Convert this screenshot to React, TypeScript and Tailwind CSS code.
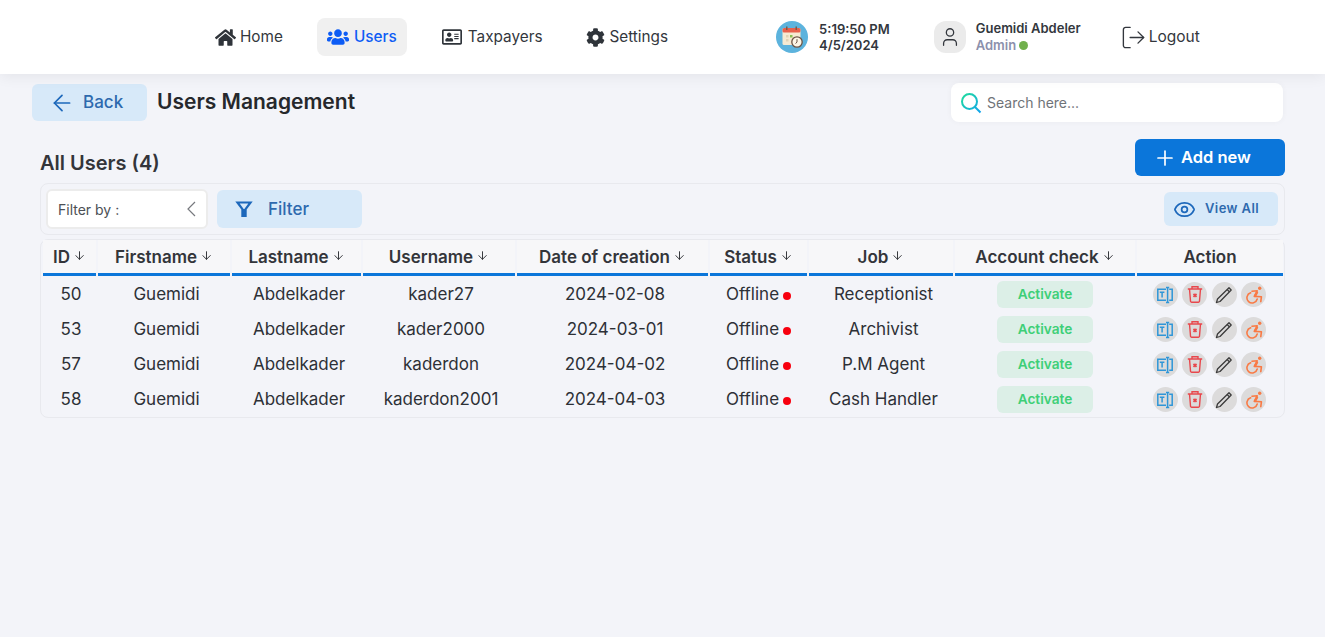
import React from 'react';
import { FaHome, FaUsers, FaCog, FaRegAddressCard } from 'react-icons/fa';
import { ArrowLeft, ArrowDown, Eye, LogOut, Plus, User } from 'lucide-react';

const rows = [
  { id: 50, username: 'kader27', date: '2024-02-08', job: 'Receptionist' },
  { id: 53, username: 'kader2000', date: '2024-03-01', job: 'Archivist' },
  { id: 57, username: 'kaderdon', date: '2024-04-02', job: 'P.M Agent' },
  { id: 58, username: 'kaderdon2001', date: '2024-04-03', job: 'Cash Handler' },
];

const columns = ['ID', 'Firstname', 'Lastname', 'Username', 'Date of creation', 'Status', 'Job', 'Account check'];

const gridCols = 'grid grid-cols-[53px_132px_129px_152px_191px_97px_144px_180px_146px] gap-x-[2px]';

const CalendarIcon = () => (
  <svg width="32" height="32" viewBox="0 0 32 32">
    <circle cx="16" cy="16" r="16" fill="#5cb3dd" />
    <rect x="6.5" y="7" width="18" height="17" rx="1.5" fill="#f6ead2" />
    <rect x="6.5" y="7" width="18" height="4.5" rx="1.5" fill="#e8604c" />
    <rect x="10" y="5.5" width="1.5" height="3.5" fill="#7a5a48" />
    <rect x="19.5" y="5.5" width="1.5" height="3.5" fill="#7a5a48" />
    <rect x="10" y="14" width="2.5" height="2.5" fill="#e3d3b5" />
    <rect x="14" y="14" width="2.5" height="2.5" fill="#8cc152" />
    <rect x="10" y="18" width="2.5" height="2.5" fill="#e3d3b5" />
    <circle cx="21" cy="21" r="5.2" fill="#fdf6e6" stroke="#6b5344" strokeWidth="1.3" />
    <path d="M21 18.2V21l-1.4 1.6" stroke="#6b5344" strokeWidth="1" fill="none" />
  </svg>
);

const SearchIcon = () => (
  <svg width="22" height="22" viewBox="0 0 22 22" fill="none">
    <defs>
      <linearGradient id="searchGrad" x1="0" y1="0" x2="1" y2="1">
        <stop offset="0" stopColor="#1fdc9c" />
        <stop offset="1" stopColor="#11a3ee" />
      </linearGradient>
    </defs>
    <path d="M9.5 2a7.5 7.5 0 1 1 0 15 7.5 7.5 0 0 1 0-15ZM15 15l5.5 5.5" stroke="url(#searchGrad)" strokeWidth="2" />
  </svg>
);

const FunnelIcon = () => (
  <svg width="18" height="18" viewBox="0 0 18 18" fill="none" stroke="#1d68bb" strokeWidth="2.2" strokeLinejoin="miter">
    <path d="M2.5 2.5h13L10.6 9v7H7.4V9Z" />
    <path d="M9 9v7" />
  </svg>
);

const ChevronIcon = () => (
  <svg width="10" height="16" viewBox="0 0 10 16" fill="none" stroke="#77797e" strokeWidth="1.2">
    <path d="M9 1 2 8l7 7" />
  </svg>
);

const TextIcon = () => (
  <svg width="18" height="18" viewBox="0 0 18 18" fill="none" stroke="#2f96d8" strokeWidth="1.5">
    <path d="M10 3.2H1.8v11H10" />
    <path d="M3.8 6.2h4.6M6.1 6.2v5.4" />
    <path d="M11.6 1.5v15M10 1.5h3.2M10 16.5h3.2" />
    <path d="M13.2 3.2h3v11h-3" />
  </svg>
);

const TrashIcon = () => (
  <svg width="18" height="19" viewBox="0 0 18 19" fill="none" stroke="#e8474c" strokeWidth="1.4">
    <path d="M1.8 4h14.4M6 4V1.8h6V4" />
    <path d="M3.5 4l1 12a1.2 1.2 0 0 0 1.2 1.2h6.6a1.2 1.2 0 0 0 1.2-1.2l1-12" />
    <path d="M7.5 8.8l3 3M10.5 8.8l-3 3" strokeWidth="1.7" />
  </svg>
);

const PencilIcon = () => (
  <svg width="18" height="18" viewBox="0 0 18 18" fill="none" stroke="#3a3a3a" strokeWidth="1.3" strokeLinejoin="round">
    <path d="M14 1.8l2.2 2.2L5 15.5l-3.5 1 1-3.5Z" />
    <path d="M12.2 3.6l2.2 2.2" />
  </svg>
);

const WheelchairIcon = () => (
  <svg width="18" height="18" viewBox="0 0 18 18" fill="none" stroke="#f97a45" strokeWidth="1.6" strokeLinecap="round" strokeLinejoin="round">
    <circle cx="14.7" cy="2.3" r="1.7" fill="#f97a45" stroke="none" />
    <path d="M5.6 6.8A5.2 5.2 0 1 0 12.2 13" />
    <path d="M7 5.2 12.2 4.8 9.2 10.4 16.4 10.8 15.8 15.7" />
    <path d="M12 6.5 10.4 9.5" strokeWidth="2.4" />
  </svg>
);

const NavItem = ({ icon, label, className }: { icon: React.ReactNode; label: string; className?: string }) => (
  <div className={`flex items-center text-[15.3px] font-normal text-[#33373d] ${className ?? ''}`}>
    {icon}
    <span>{label}</span>
  </div>
);

const ActionCircle = ({ children }: { children: React.ReactNode }) => (
  <span className="w-[25px] h-[25px] rounded-full bg-[#dcdbdb] flex items-center justify-center">{children}</span>
);

const ActionIcons = () => (
  <div className="flex items-center justify-center gap-[4.5px] pr-[1px]">
    <ActionCircle><TextIcon /></ActionCircle>
    <ActionCircle><TrashIcon /></ActionCircle>
    <ActionCircle><PencilIcon /></ActionCircle>
    <ActionCircle><WheelchairIcon /></ActionCircle>
  </div>
);

export default function App() {
  return (
    <div className="min-h-[637px] bg-[#f3f4f9] font-['Inter',sans-serif] text-[#2b2b2b]">
      <header className="h-[74px] bg-white shadow-[0_2px_14px_rgba(0,0,0,0.07)] flex items-center pl-[215px] relative">
        <NavItem icon={<FaHome size={21} className="mr-[4px] text-[#2f343a]" />} label="Home" />
        <div className="ml-[34px] w-[90px] h-[38px] rounded-lg bg-[#f0f0f0] flex items-center justify-center text-[15.3px] font-medium text-[#0d5cf5]">
          <FaUsers size={22} className="mr-[5px]" />
          <span>Users</span>
        </div>
        <NavItem className="ml-[35px]" icon={<FaRegAddressCard size={20} className="mr-[6px] text-[#2f343a]" />} label="Taxpayers" />
        <NavItem className="ml-[44px]" icon={<FaCog size={19} className="mr-[4px] text-[#2f343a]" />} label="Settings" />
        <div className="ml-[108px]"><CalendarIcon /></div>
        <div className="ml-[11px] text-[13px] leading-[16px] font-semibold text-[#33373d]">
          <div>5:19:50 PM</div>
          <div>4/5/2024</div>
        </div>
        <div className="ml-[44px] w-[32px] h-[32px] rounded-xl bg-[#ebebeb] flex items-center justify-center text-[#33373d]">
          <User size={22} strokeWidth={1.4} />
        </div>
        <div className="ml-[10px]">
          <div className="text-[13px] leading-[17px] font-semibold text-[#33373d]">Guemidi Abdeler</div>
          <div className="flex items-center text-[13px] leading-[17px] font-semibold text-[#8c90ac]">
            Admin
            <span className="ml-[3px] w-[9px] h-[9px] rounded-full bg-[#71b04d]" />
          </div>
        </div>
        <div className="ml-[39px] flex items-center text-[15.5px] text-[#33373d]">
          <LogOut size={27} strokeWidth={1.2} className="mr-[2px]" />
          <span>Logout</span>
        </div>
      </header>

      <main className="px-[40px]">
        <div className="flex items-center pt-[9px] h-[48px]">
          <div className="-ml-[8px] w-[115px] h-[37px] rounded-md bg-[#d7e9f9] flex items-center pl-[17px] text-[17px] font-medium text-[#2e69ae]">
            <ArrowLeft size={26} strokeWidth={1.6} className="mr-[8px] text-[#1d68bb]" />
            Back
          </div>
          <h1 className="ml-[10px] text-[21px] font-semibold text-[#26282c] -mt-[1px]">Users Management</h1>
          <div className="ml-auto mr-[2px] w-[332px] h-[39px] rounded-lg bg-white shadow-[0_0_6px_rgba(0,0,0,0.04)] flex items-center pl-[9px] text-[14px] text-[#6f7378]">
            <SearchIcon />
            <span className="ml-[5px]">Search here...</span>
          </div>
        </div>

        <div className="flex items-end justify-between mt-[17px]">
          <h2 className="text-[20px] leading-[24px] font-semibold text-[#33353a] mb-[1px]">All Users (4)</h2>
          <div className="w-[150px] h-[37px] rounded-md bg-[#0b76da] flex items-center pl-[18px] text-[16.5px] font-semibold text-white">
            <Plus size={24} strokeWidth={1.7} className="mr-[4px]" />
            Add new
          </div>
        </div>

        <div className="mt-[7px] h-[52px] rounded-lg border border-[#e8e9ee] flex items-center pl-[5px] pr-[6px]">
          <div className="w-[162px] h-[40px] rounded-md bg-white border-2 border-[#ececec] flex items-center justify-between pl-[10px] pr-[10px] text-[14px] text-[#4c5055]">
            Filter by :
            <ChevronIcon />
          </div>
          <div className="ml-[9px] w-[145px] h-[38px] rounded-md bg-[#d7e9f9] flex items-center pl-[18px] text-[17px] font-medium text-[#2e69ae]">
            <span className="mr-[15px]"><FunnelIcon /></span>
            <span className="pt-[2px]">Filter</span>
          </div>
          <div className="ml-auto w-[114px] h-[34px] rounded-md bg-[#d7e9f9] flex items-center pl-[9px] text-[13px] font-semibold tracking-[0.4px] text-[#2e69ae]">
            <Eye size={23} strokeWidth={1.8} className="mr-[9px] text-[#1d68bb]" />
            View All
          </div>
        </div>

        <div className="mt-[4px] h-[179px] rounded-lg border border-[#e8e9ee] px-[2px]">
          <div className={`${gridCols} mb-[1px]`}>
            {columns.map((col) => (
              <div
                key={col}
                className="h-[36px] pt-[2px] bg-[#f7f7f9] border-b-[3px] border-[#0b76da] flex items-center justify-center text-[17px] font-semibold text-[#33353a]"
              >
                {col}
                <ArrowDown size={13} strokeWidth={1.8} className="ml-[3px] -mt-[5px]" />
              </div>
            ))}
            <div className="h-[36px] pt-[2px] bg-[#f7f7f9] border-b-[3px] border-[#0b76da] flex items-center justify-center text-[17px] font-semibold text-[#33353a]">
              Action
            </div>
          </div>
          {rows.map((row) => (
            <div key={row.id} className={`${gridCols} h-[35px] items-center text-center text-[17px] text-[#2d3036]`}>
              <div className="pl-[3px]">{row.id}</div>
              <div className="pl-[5px]">Guemidi</div>
              <div className="pl-[5px]">Abdelkader</div>
              <div className="pl-[4px]">{row.username}</div>
              <div className="pl-[5px]">{row.date}</div>
              <div className="flex items-center justify-center">
                Offline
                <span className="ml-[4px] mt-[2px] w-[8px] h-[8px] rounded-full bg-[#f7000f]" />
              </div>
              <div className="pl-[5px]">{row.job}</div>
              <div className="flex justify-center">
                <span className="w-[96px] h-[27px] rounded-md bg-[#dcefe7] flex items-center justify-center text-[13.7px] font-semibold text-[#3ecf78]">
                  Activate
                </span>
              </div>
              <ActionIcons />
            </div>
          ))}
        </div>
      </main>
    </div>
  );
}
